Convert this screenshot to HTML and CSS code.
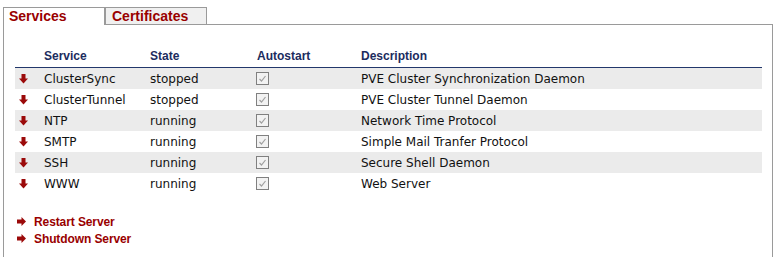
FILE: index.html
```html
<!DOCTYPE html>
<html>
<head>
<meta charset="utf-8">
<link rel="stylesheet" href="styles.css">
</head>
<body>
<div class="wrap">
  <div class="tabs">
    <div class="tab tab-active">Services</div>
    <div class="tab tab-inactive">Certificates</div>
    <div class="tab-fill"></div>
  </div>
  <div class="panel">
    <table class="svc">
      <colgroup>
        <col class="c-icon"><col class="c-name"><col class="c-state"><col class="c-auto"><col>
      </colgroup>
      <thead>
        <tr><th></th><th>Service</th><th>State</th><th>Autostart</th><th>Description</th></tr>
      </thead>
      <tbody>
        <tr class="odd"><td><svg class="ico-down" width="9" height="10" viewBox="0 0 9 10"><rect x="2.5" y="0" width="4" height="5" fill="#9b0a0a"/><polygon points="0,4.5 9,4.5 4.5,9.5" fill="#9b0a0a"/></svg></td><td>ClusterSync</td><td>stopped</td><td><svg class="chk" width="13" height="13" viewBox="0 0 13 13"><rect x="0.5" y="0.5" width="12" height="12" fill="#f2f2f2" stroke="#808080"/><path d="M3.5 7 L5.5 9 L9.5 4" fill="none" stroke="#a0a0a0" stroke-width="1.2"/></svg></td><td>PVE Cluster Synchronization Daemon</td></tr>
        <tr><td><svg class="ico-down" width="9" height="10" viewBox="0 0 9 10"><rect x="2.5" y="0" width="4" height="5" fill="#9b0a0a"/><polygon points="0,4.5 9,4.5 4.5,9.5" fill="#9b0a0a"/></svg></td><td>ClusterTunnel</td><td>stopped</td><td><svg class="chk" width="13" height="13" viewBox="0 0 13 13"><rect x="0.5" y="0.5" width="12" height="12" fill="#f2f2f2" stroke="#808080"/><path d="M3.5 7 L5.5 9 L9.5 4" fill="none" stroke="#a0a0a0" stroke-width="1.2"/></svg></td><td>PVE Cluster Tunnel Daemon</td></tr>
        <tr class="odd"><td><svg class="ico-down" width="9" height="10" viewBox="0 0 9 10"><rect x="2.5" y="0" width="4" height="5" fill="#9b0a0a"/><polygon points="0,4.5 9,4.5 4.5,9.5" fill="#9b0a0a"/></svg></td><td>NTP</td><td>running</td><td><svg class="chk" width="13" height="13" viewBox="0 0 13 13"><rect x="0.5" y="0.5" width="12" height="12" fill="#f2f2f2" stroke="#808080"/><path d="M3.5 7 L5.5 9 L9.5 4" fill="none" stroke="#a0a0a0" stroke-width="1.2"/></svg></td><td>Network Time Protocol</td></tr>
        <tr><td><svg class="ico-down" width="9" height="10" viewBox="0 0 9 10"><rect x="2.5" y="0" width="4" height="5" fill="#9b0a0a"/><polygon points="0,4.5 9,4.5 4.5,9.5" fill="#9b0a0a"/></svg></td><td>SMTP</td><td>running</td><td><svg class="chk" width="13" height="13" viewBox="0 0 13 13"><rect x="0.5" y="0.5" width="12" height="12" fill="#f2f2f2" stroke="#808080"/><path d="M3.5 7 L5.5 9 L9.5 4" fill="none" stroke="#a0a0a0" stroke-width="1.2"/></svg></td><td>Simple Mail Tranfer Protocol</td></tr>
        <tr class="odd"><td><svg class="ico-down" width="9" height="10" viewBox="0 0 9 10"><rect x="2.5" y="0" width="4" height="5" fill="#9b0a0a"/><polygon points="0,4.5 9,4.5 4.5,9.5" fill="#9b0a0a"/></svg></td><td>SSH</td><td>running</td><td><svg class="chk" width="13" height="13" viewBox="0 0 13 13"><rect x="0.5" y="0.5" width="12" height="12" fill="#f2f2f2" stroke="#808080"/><path d="M3.5 7 L5.5 9 L9.5 4" fill="none" stroke="#a0a0a0" stroke-width="1.2"/></svg></td><td>Secure Shell Daemon</td></tr>
        <tr><td><svg class="ico-down" width="9" height="10" viewBox="0 0 9 10"><rect x="2.5" y="0" width="4" height="5" fill="#9b0a0a"/><polygon points="0,4.5 9,4.5 4.5,9.5" fill="#9b0a0a"/></svg></td><td>WWW</td><td>running</td><td><svg class="chk" width="13" height="13" viewBox="0 0 13 13"><rect x="0.5" y="0.5" width="12" height="12" fill="#f2f2f2" stroke="#808080"/><path d="M3.5 7 L5.5 9 L9.5 4" fill="none" stroke="#a0a0a0" stroke-width="1.2"/></svg></td><td>Web Server</td></tr>
      </tbody>
    </table>
    <div class="actions">
      <a class="action" href="#"><svg class="ico-right" width="9" height="9" viewBox="0 0 9 9"><rect x="0" y="2.5" width="5" height="4" fill="#9b0a0a"/><polygon points="4.5,0 4.5,9 9,4.5" fill="#9b0a0a"/></svg>Restart Server</a>
      <a class="action" href="#"><svg class="ico-right" width="9" height="9" viewBox="0 0 9 9"><rect x="0" y="2.5" width="5" height="4" fill="#9b0a0a"/><polygon points="4.5,0 4.5,9 9,4.5" fill="#9b0a0a"/></svg>Shutdown Server</a>
    </div>
  </div>
</div>
</body>
</html>
```
FILE: styles.css
```css
html, body {
  margin: 0;
  padding: 0;
  background: #ffffff;
}

.wrap {
  margin: 7px 4px 0 3px;
}

.tabs {
  display: flex;
  align-items: flex-end;
}

.tab {
  box-sizing: border-box;
  width: 102px;
  height: 18px;
  border: 1px solid #9a9a9a;
  font-family: "Liberation Sans", Arial, sans-serif;
  font-weight: bold;
  font-size: 14px;
  line-height: 16px;
  color: #990000;
  white-space: nowrap;
}

.tab-active {
  border-bottom: none;
  background: #ffffff;
  padding-left: 5px;
}

.tab-inactive {
  background: #f0f0f0;
  padding-left: 6px;
}

.tab-fill {
  flex: 1;
  border-bottom: 1px solid #9a9a9a;
}

.panel {
  border: 1px solid #9a9a9a;
  border-top: none;
  padding: 20px 10px 40px 11px;
}

.svc {
  width: 100%;
  table-layout: fixed;
  border-collapse: collapse;
}

.c-icon { width: 29px; }
.c-name { width: 106px; }
.c-state { width: 107px; }
.c-auto { width: 104px; }

.svc th {
  height: 22px;
  padding: 0;
  text-align: left;
  vertical-align: middle;
  font-family: "Liberation Sans", Arial, sans-serif;
  font-weight: bold;
  font-size: 12px;
  color: #1c2c5e;
  border-bottom: 1px solid #22376b;
}

.svc td {
  height: 21px;
  padding: 0;
  vertical-align: middle;
  font-family: "DejaVu Sans", sans-serif;
  font-size: 12px;
  color: #111111;
  white-space: nowrap;
}

.svc tr.odd td {
  background: #ebebeb;
}

.ico-down {
  display: block;
  margin-left: 4px;
}

.chk {
  display: block;
  margin-left: -1px;
}

.actions {
  display: flex;
  flex-direction: column;
  gap: 2px;
  margin-top: 20px;
}

.action {
  display: flex;
  align-items: center;
  gap: 8px;
  margin-left: 2px;
  height: 15px;
  font-family: "Liberation Sans", Arial, sans-serif;
  font-weight: bold;
  font-size: 12px;
  color: #990000;
  text-decoration: none;
  letter-spacing: -0.1px;
}
```
